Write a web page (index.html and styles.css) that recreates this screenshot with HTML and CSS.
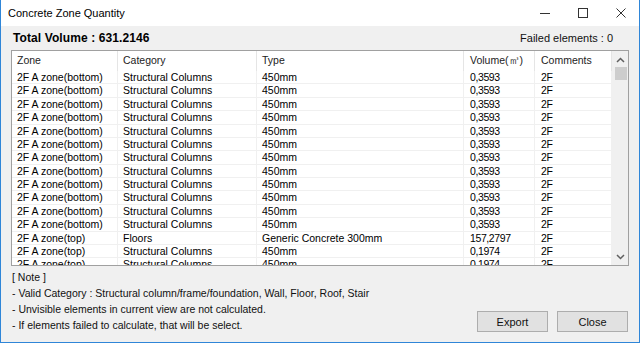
FILE: index.html
```html
<!DOCTYPE html>
<html>
<head>
<meta charset="utf-8">
<link rel="stylesheet" href="styles.css">
</head>
<body>
<div class="window">
  <div class="titlebar">
    <div class="title">Concrete Zone Quantity</div>
    <div class="controls">
      <svg class="ctl" width="12" height="12" viewBox="0 0 12 12"><path d="M1 6.5H11" stroke="#333" stroke-width="1"/></svg>
      <svg class="ctl" width="12" height="12" viewBox="0 0 12 12"><rect x="1.5" y="1.5" width="9" height="9" fill="none" stroke="#333" stroke-width="1"/></svg>
      <svg class="ctl" width="12" height="12" viewBox="0 0 12 12"><path d="M1.5 1.5L10.5 10.5M10.5 1.5L1.5 10.5" stroke="#333" stroke-width="1"/></svg>
    </div>
  </div>
  <div class="content">
    <div class="summary">
      <div class="total">Total Volume : 631.2146</div>
      <div class="failed">Failed elements : 0</div>
    </div>
    <div class="grid">
      <div class="list">
        <div class="row head">
          <div class="c">Zone</div><div class="c">Category</div><div class="c">Type</div><div class="c">Volume(㎥)</div><div class="c">Comments</div>
        </div>
        <div class="row"><div class="c">2F A zone(bottom)</div><div class="c">Structural Columns</div><div class="c">450mm</div><div class="c num">0,3593</div><div class="c num">2F</div></div>
        <div class="row"><div class="c">2F A zone(bottom)</div><div class="c">Structural Columns</div><div class="c">450mm</div><div class="c num">0,3593</div><div class="c num">2F</div></div>
        <div class="row"><div class="c">2F A zone(bottom)</div><div class="c">Structural Columns</div><div class="c">450mm</div><div class="c num">0,3593</div><div class="c num">2F</div></div>
        <div class="row"><div class="c">2F A zone(bottom)</div><div class="c">Structural Columns</div><div class="c">450mm</div><div class="c num">0,3593</div><div class="c num">2F</div></div>
        <div class="row"><div class="c">2F A zone(bottom)</div><div class="c">Structural Columns</div><div class="c">450mm</div><div class="c num">0,3593</div><div class="c num">2F</div></div>
        <div class="row"><div class="c">2F A zone(bottom)</div><div class="c">Structural Columns</div><div class="c">450mm</div><div class="c num">0,3593</div><div class="c num">2F</div></div>
        <div class="row"><div class="c">2F A zone(bottom)</div><div class="c">Structural Columns</div><div class="c">450mm</div><div class="c num">0,3593</div><div class="c num">2F</div></div>
        <div class="row"><div class="c">2F A zone(bottom)</div><div class="c">Structural Columns</div><div class="c">450mm</div><div class="c num">0,3593</div><div class="c num">2F</div></div>
        <div class="row"><div class="c">2F A zone(bottom)</div><div class="c">Structural Columns</div><div class="c">450mm</div><div class="c num">0,3593</div><div class="c num">2F</div></div>
        <div class="row"><div class="c">2F A zone(bottom)</div><div class="c">Structural Columns</div><div class="c">450mm</div><div class="c num">0,3593</div><div class="c num">2F</div></div>
        <div class="row"><div class="c">2F A zone(bottom)</div><div class="c">Structural Columns</div><div class="c">450mm</div><div class="c num">0,3593</div><div class="c num">2F</div></div>
        <div class="row"><div class="c">2F A zone(bottom)</div><div class="c">Structural Columns</div><div class="c">450mm</div><div class="c num">0,3593</div><div class="c num">2F</div></div>
        <div class="row"><div class="c">2F A zone(top)</div><div class="c">Floors</div><div class="c">Generic Concrete 300mm</div><div class="c num">157,2797</div><div class="c num">2F</div></div>
        <div class="row"><div class="c">2F A zone(top)</div><div class="c">Structural Columns</div><div class="c">450mm</div><div class="c num">0,1974</div><div class="c num">2F</div></div>
        <div class="row"><div class="c">2F A zone(top)</div><div class="c">Structural Columns</div><div class="c">450mm</div><div class="c num">0,1974</div><div class="c num">2F</div></div>
      </div>
      <div class="scrollbar">
        <svg class="arrow" width="9" height="6" viewBox="0 0 9 6"><path d="M1 5L4.5 1.5L8 5" fill="none" stroke="#606060" stroke-width="1.5"/></svg>
        <div class="thumb"></div>
        <div class="track"></div>
        <svg class="arrow" width="9" height="6" viewBox="0 0 9 6"><path d="M1 1L4.5 4.5L8 1" fill="none" stroke="#606060" stroke-width="1.5"/></svg>
      </div>
    </div>
    <div class="bottom">
      <div class="notes">
        <div class="line">[ Note ]</div>
        <div class="line">- Valid Category : Structural column/frame/foundation, Wall, Floor, Roof, Stair</div>
        <div class="line">- Unvisible elements in current view are not calculated.</div>
        <div class="line">- If elements failed to calculate, that will be select.</div>
      </div>
      <div class="buttons">
        <button class="btn">Export</button>
        <button class="btn">Close</button>
      </div>
    </div>
  </div>
</div>
</body>
</html>
```

FILE: styles.css
```css
* { box-sizing: border-box; }
html, body { margin: 0; padding: 0; }
body {
  width: 640px;
  height: 343px;
  overflow: hidden;
  font-family: "Liberation Sans", Arial, sans-serif;
  color: #000;
  background: #fff;
}
.window {
  width: 640px;
  height: 343px;
  border-left: 1px solid #2f86d8;
  border-right: 1px solid #2f86d8;
  border-bottom: 1px solid #2f86d8;
  display: flex;
  flex-direction: column;
}
.titlebar {
  height: 26px;
  background: #fff;
  display: flex;
  align-items: center;
  justify-content: space-between;
  padding-left: 7px;
}
.title {
  font-size: 11px;
  color: #000;
  margin-top: -1px;
}
.controls {
  display: flex;
  align-items: center;
  gap: 26px;
  padding-right: 12px;
  margin-top: -1px;
}
.ctl { display: block; }
.content {
  flex: 1;
  background: #f0f0f0;
  padding: 0 10px 9px 10px;
  display: flex;
  flex-direction: column;
}
.summary {
  height: 24px;
  display: flex;
  align-items: center;
  justify-content: space-between;
  padding-left: 2px;
  padding-right: 16px;
}
.total {
  font-size: 12px;
  font-weight: bold;
  letter-spacing: 0.1px;
}
.failed {
  font-size: 11px;
  color: #111;
}
.grid {
  height: 216px;
  border: 1px solid #a0a0a0;
  background: #fff;
  display: flex;
  overflow: hidden;
}
.list {
  width: 600px;
  overflow: hidden;
}
.row {
  display: grid;
  grid-template-columns: 106px 139px 207px 71px 77px;
  height: 13.38px;
  border-bottom: 1px solid #f0f0f0;
  font-size: 10.5px;
  line-height: 12.4px;
}
.row .c {
  padding-left: 5px;
  border-right: 1px solid #f0f0f0;
  white-space: nowrap;
  overflow: hidden;
}
.row .c:nth-child(4), .row .c:nth-child(5) { padding-left: 6px; }
.row.head {
  height: 20px;
  line-height: 19px;
  border-bottom: none;
  color: #222;
}
.row.head .c { border-right: 1px solid #e5e5e5; }
.num { letter-spacing: -0.4px; }
.scrollbar {
  width: 16px;
  background: #f0f0f0;
  border-left: 1px solid #f0f0f0;
  display: flex;
  flex-direction: column;
  align-items: center;
}
.arrow { display: block; margin: 6px 0 4px; }
.thumb {
  width: 12px;
  height: 13px;
  background: #cdcdcd;
}
.track { flex: 1; }
.scrollbar .arrow:last-child { margin: 0 0 5px; }
.bottom {
  flex: 1;
  display: flex;
  justify-content: space-between;
  align-items: flex-end;
  padding-top: 3px;
}
.notes {
  align-self: flex-start;
  font-size: 10.5px;
  color: #111;
  padding-left: 1px;
}
.line {
  height: 16px;
  line-height: 16px;
}
.buttons {
  display: flex;
  gap: 9px;
  margin-right: 1px;
  margin-bottom: 1px;
}
.btn {
  width: 71px;
  height: 21px;
  background: #e1e1e1;
  border: 1px solid #adadad;
  font-family: "Liberation Sans", Arial, sans-serif;
  font-size: 11px;
  color: #111;
  padding: 0;
}
```
